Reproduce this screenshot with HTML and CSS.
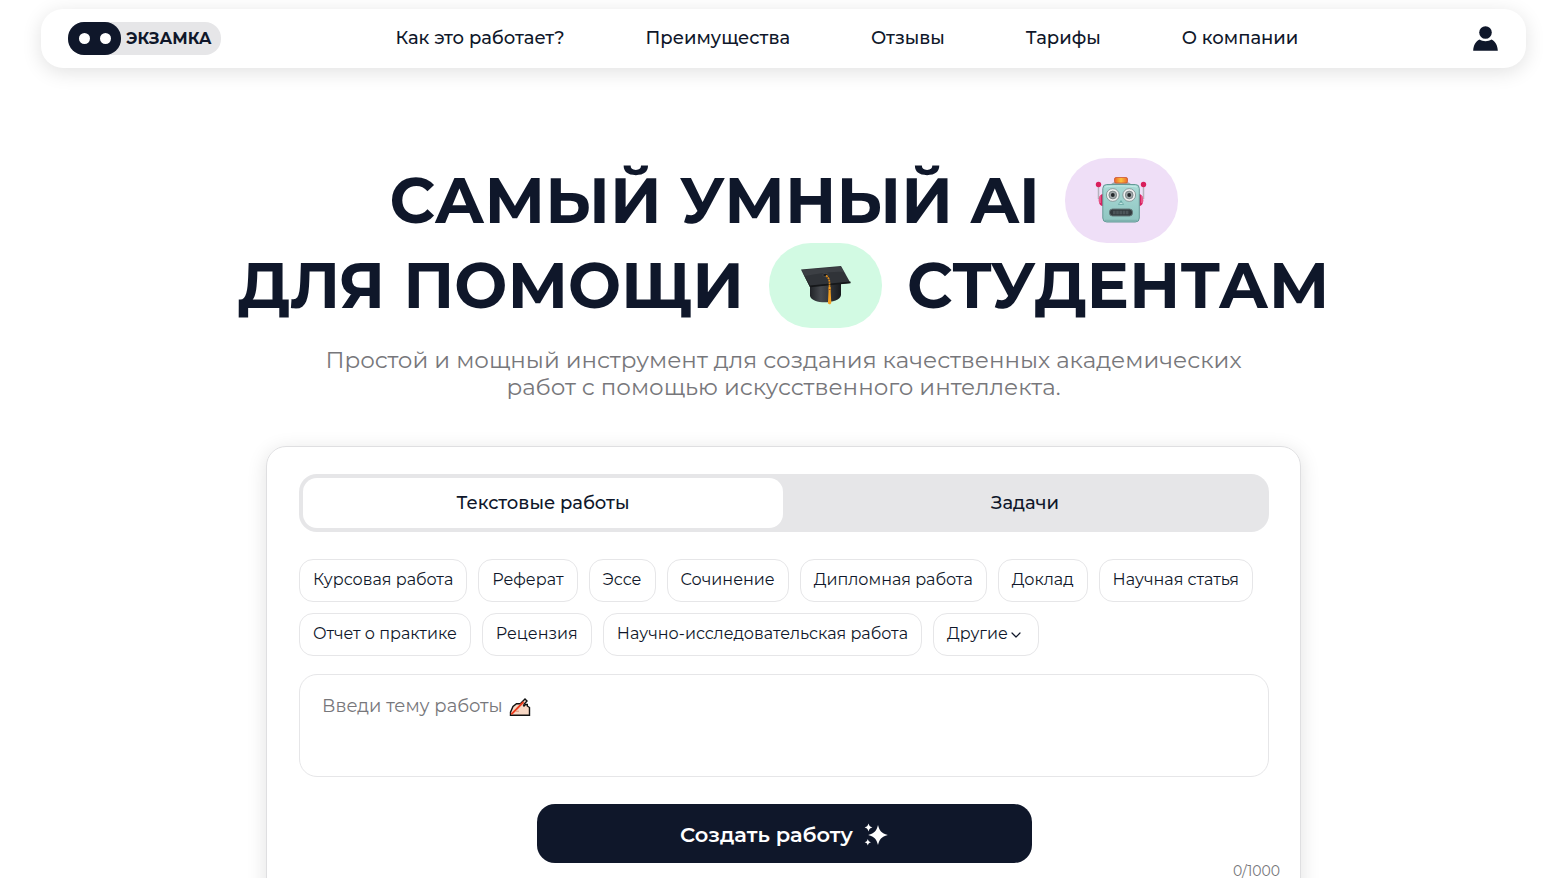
FILE: index.html
```html
<!DOCTYPE html>
<html lang="ru">
<head>
<meta charset="utf-8">
<meta name="viewport" content="width=device-width, initial-scale=1">
<title>ЭКЗАМКА</title>
<link rel="stylesheet" href="styles.css">
</head>
<body>
<header class="header">
  <a class="logo" href="#">
    <span class="logo-mark"><span class="logo-eye"></span><span class="logo-eye"></span></span>
    <span class="logo-name">ЭКЗАМКА</span>
  </a>
  <nav class="nav">
    <a href="#how">Как это работает?</a>
    <a href="#benefits">Преимущества</a>
    <a href="#reviews">Отзывы</a>
    <a href="#prices">Тарифы</a>
    <a href="#about">О компании</a>
  </nav>
  <a class="profile" href="#profile" aria-label="Профиль">
    <svg width="26" height="26" viewBox="0 0 26 26" fill="#0f172a"><circle cx="12.500" cy="6.500" r="6.300"/><path d="M.2 24.700C.4 19.500 2.700 15.600 6.500 13.600c3.500 2.200 8.500 2.200 12 0 3.800 2 6.100 5.900 6.300 11.100z"/></svg>
  </a>
</header>

<main class="main">
  <h1 class="title">
    <span class="title-line">САМЫЙ УМНЫЙ AI
      <span class="pill pill-robot">
        <svg width="52" height="48" viewBox="0 0 52 48">
          <defs>
            <linearGradient id="face" x1="0" y1="0" x2="0" y2="1"><stop offset="0" stop-color="#a9dad6"/><stop offset="1" stop-color="#8fc5c1"/></linearGradient>
            <linearGradient id="lamp" x1="0" y1="0" x2="1" y2="0"><stop offset="0" stop-color="#e8632c"/><stop offset=".5" stop-color="#fcc43a"/><stop offset="1" stop-color="#e9682d"/></linearGradient>
          </defs>
          <path d="M3.500 10v12M48.500 10v12" stroke="#b5b2bd" stroke-width="1.500"/>
          <circle cx="3.500" cy="7.500" r="2.700" fill="#d91f5c"/><circle cx="48.500" cy="7.500" r="2.700" fill="#d91f5c"/>
          <path d="M8 17c-2.500 0-4.300 3-4.300 6.500S5.500 29 8 29zM44 17c2.500 0 4.300 3 4.300 6.500S46.500 29 44 29z" fill="#d62261"/>
          <path d="M5 19v7M47 19v7" stroke="#ef6c98" stroke-width="1.400"/>
          <path d="M16 7.500C17 5.500 20 4.500 26 4.500s9 1 10 3V9H16z" fill="#9aa7ab"/>
          <rect x="19.500" y=".5" width="13" height="5.500" rx="1.500" fill="url(#lamp)" stroke="#cf5630" stroke-width=".8"/>
          <rect x="7.800" y="7.500" width="36.500" height="37.500" rx="4" fill="url(#face)" stroke="#649996"/>
          <path d="M10 10c8-1.500 24-1.500 32 0" stroke="#c8ebe8" fill="none"/>
          <path d="M10 43.500h32" stroke="#7fb3af" stroke-width="1.500"/>
          <g stroke="#79898c" stroke-width=".8"><circle cx="17.800" cy="18" r="6.400" fill="#eef0f0"/><circle cx="34.200" cy="18" r="6.400" fill="#eef0f0"/></g>
          <g fill="#a1a8aa" stroke="#727c7f" stroke-width=".8"><circle cx="17.800" cy="18" r="3.900"/><circle cx="34.200" cy="18" r="3.900"/></g>
          <circle cx="17.800" cy="18" r="1.900" fill="#23272b"/><circle cx="34.200" cy="18" r="1.900" fill="#23272b"/>
          <path d="M26 23l-3.200 4.800h6.400z" fill="#69a8a5"/><path d="M24.500 26.300h3" stroke="#dbf4f1"/>
          <rect x="14.500" y="32" width="23" height="7" rx="3" fill="#343b3f" stroke="#65787a"/>
          <path d="M18 35.500h16" stroke="#4c5559" stroke-width="3.500" stroke-dasharray="2.600 .6"/>
        </svg>
      </span>
    </span>
    <span class="title-line">ДЛЯ ПОМОЩИ
      <span class="pill pill-cap">
        <svg width="52" height="44" viewBox="0 0 52 44">
          <defs><linearGradient id="cap" x1="0" y1="0" x2="1" y2="0"><stop offset="0" stop-color="#202327"/><stop offset=".35" stop-color="#474a4f"/><stop offset="1" stop-color="#181a1d"/></linearGradient></defs>
          <path d="M10 20l31-2v13c-1 9-29 10-31 1z" fill="url(#cap)"/>
          <path d="M1 5.500L41 2l9.500 17L10 23z" fill="#303338"/>
          <path d="M1 5.500L10 21.500l40.500-4v1.700L10 23.200z" fill="#151719"/>
          <path d="M2 6l39-3.200 3 5.200C30 7 18 10 5 12z" fill="#44474c" opacity=".6"/>
          <ellipse cx="25.500" cy="11" rx="2.700" ry="1.600" fill="#181a1d" stroke="#55585d" stroke-width=".6"/>
          <path d="M26 11.500c4 3 3.500 6 3.500 13" stroke="#df8b18" stroke-width="1.700" stroke-dasharray="2 .7" fill="none"/>
          <path d="M28.500 23h2.200v5l.6 11-1.300 1.500-2.100-1 .6-11.500z" fill="#f4a021"/>
          <path d="M28.500 25.500h2.200" stroke="#a45411"/>
        </svg>
      </span>
      СТУДЕНТАМ</span>
  </h1>
  <p class="subtitle">Простой и мощный инструмент для создания качественных академических<br>работ с помощью искусственного интеллекта.</p>

  <form class="card">
    <div class="tabs">
      <button class="tab tab-active" type="button">Текстовые работы</button>
      <button class="tab" type="button">Задачи</button>
    </div>
    <div class="chips">
      <button class="chip" type="button">Курсовая работа</button>
      <button class="chip" type="button">Реферат</button>
      <button class="chip" type="button">Эссе</button>
      <button class="chip" type="button">Сочинение</button>
      <button class="chip" type="button">Дипломная работа</button>
      <button class="chip" type="button">Доклад</button>
      <button class="chip" type="button">Научная статья</button>
      <button class="chip" type="button">Отчет о практике</button>
      <button class="chip" type="button">Рецензия</button>
      <button class="chip" type="button">Научно-исследовательская работа</button>
      <button class="chip" type="button">Другие<svg class="chevron" width="12" height="8" viewBox="0 0 12 8" fill="none" stroke="#0f172a" stroke-width="1.200" stroke-linecap="round" stroke-linejoin="round"><path d="M2 2l4 4 4-4"/></svg></button>
    </div>
    <div class="topic">
      <textarea class="topic-input" aria-label="Введи тему работы" placeholder="Введи тему работы"></textarea>
      <svg class="topic-icon" width="22" height="20" viewBox="0 0 22 20" stroke-linejoin="miter">
        <path d="M1.500 18.200v-3L4 9.500l3.500-2.800h5L15 9l1.500-1.500h1.800V9l2.200 1.500v7.700z" fill="#f7d7c4" stroke="#111" stroke-width="1.400"/>
        <path d="M11.500 6.500L16 2l2 2-5 5.500z" fill="#f7d7c4"/>
        <path d="M11.500 6.500L16 2l2 2-3.500 3.800" fill="none" stroke="#111" stroke-width="1.400"/>
        <path d="M2.300 17.300L14.500 5" stroke="#ee3b1c" stroke-width="1.800"/>
        <path d="M7 14.300h3" stroke="#e0a58c" stroke-width="1.300" fill="none"/>
      </svg>
    </div>
    <button class="submit" type="submit">Создать работу
      <svg width="24" height="24" viewBox="0 0 24 24" fill="#fff"><path d="M14 2c1.500 6 3.300 7.900 9.800 10-6.500 2.100-8.300 4-9.800 10-1.500-6-3.300-7.900-9.800-10C10.700 9.900 12.500 8 14 2z"/><path d="M4.500.6c.8 2.500 1.500 3.200 3.900 3.900-2.400.7-3.100 1.400-3.900 3.900C3.700 5.900 3 5.200.6 4.500 3 3.800 3.700 3.100 4.500.6zM3.800 16c.6 2.100 1.200 2.600 3.200 3.200-2 .6-2.600 1.100-3.200 3.200-.6-2.100-1.200-2.600-3.200-3.200 2-.6 2.600-1.100 3.200-3.200z"/></svg>
    </button>
    <div class="counter">0/1000</div>
  </form>
</main>
</body>
</html>
```
FILE: styles.css
```css
* { box-sizing: border-box; }

html { overflow-x: hidden; }

body {
  margin: 0;
  padding: 9px 32px 0 41px;
  background: #fff;
  color: #0f172a;
  font-family: Montserrat, Inter, "Open Sans", sans-serif;
}

a { color: inherit; text-decoration: none; }

button, textarea { font: inherit; color: inherit; }

.header {
  display: flex;
  align-items: center;
  justify-content: space-between;
  height: 59px;
  padding: 0 27px;
  border-radius: 22px;
  background: #fff;
  box-shadow: 0 4px 20px rgba(0, 0, 0, 0.12);
}

.logo {
  display: flex;
  align-items: center;
  height: 33px;
  border-radius: 16px;
  background: #e6e6e8;
}

.logo-mark {
  display: flex;
  align-items: center;
  justify-content: center;
  gap: 10px;
  width: 53px;
  height: 33px;
  border-radius: 16px;
  background: #0f172a;
}

.logo-eye {
  width: 11px;
  height: 11px;
  border-radius: 50%;
  background: #fff;
}

.logo-name {
  padding: 0 9px 0 5px;
  font-size: 16px;
  font-weight: 700;
}

.nav {
  display: flex;
  gap: 81px;
  padding-bottom: 2px;
  font-size: 18px;
  font-weight: 500;
}

.profile { display: flex; }

.main {
  display: flex;
  flex-direction: column;
  align-items: center;
  padding-top: 90px;
}

.title {
  margin: 0;
  font-size: 63px;
  font-weight: 700;
}

.title-line {
  display: flex;
  align-items: center;
  justify-content: center;
  gap: 25px;
  line-height: 85px;
  white-space: nowrap;
}

.pill {
  display: flex;
  align-items: center;
  justify-content: center;
  width: 113px;
  height: 85px;
  border-radius: 42px;
}

.pill-robot { background: #efdff7; }

.pill-cap { background: #d2fae3; }

.subtitle {
  margin: 19px 0 0;
  color: #77777b;
  font-size: 23px;
  font-weight: 400;
  line-height: 27px;
  text-align: center;
}

.card {
  display: flex;
  flex-direction: column;
  width: 100%;
  max-width: 1035px;
  margin: 45px 0 0;
  padding: 27px 31px 27px 32px;
  border: 1px solid #dfdfe1;
  border-radius: 20px;
  box-shadow: 0 4px 20px rgba(0, 0, 0, 0.12);
}

.tabs {
  display: flex;
  gap: 2px;
  padding: 4px;
  border-radius: 18px;
  background: #e6e6e8;
}

.tab {
  flex: 1;
  height: 50px;
  padding: 0;
  border: 0;
  border-radius: 14px;
  background: transparent;
  font-size: 18px;
  font-weight: 500;
}

.tab-active { background: #fff; }

.chips {
  display: flex;
  flex-wrap: wrap;
  gap: 11px;
  margin-top: 27px;
}

.chip {
  display: flex;
  align-items: center;
  height: 43px;
  padding: 0 13px 2px;
  border: 1px solid #e6e6e8;
  border-radius: 14px;
  background: #fff;
  font-size: 16px;
  font-weight: 400;
}

.chevron { margin: 3px 3px 0 2px; }

.topic {
  position: relative;
  margin-top: 18px;
}

.topic-input {
  display: block;
  width: 100%;
  height: 103px;
  padding: 20px 22px;
  border: 1px solid #e6e6e8;
  border-radius: 18px;
  background: #fff;
  font-size: 18px;
  font-weight: 400;
  line-height: 22px;
  resize: none;
}

.topic-input::placeholder { color: #77777b; opacity: 1; }

.topic-icon {
  position: absolute;
  top: 23px;
  left: 210px;
}

.submit {
  display: flex;
  align-items: center;
  align-self: center;
  justify-content: center;
  gap: 11px;
  width: 100%;
  max-width: 495px;
  height: 59px;
  margin-top: 27px;
  padding: 2px 0 0;
  border: 0;
  border-radius: 18px;
  background: #0f172a;
  color: #fff;
  font-size: 21px;
  font-weight: 600;
}

.counter {
  align-self: flex-end;
  margin-right: -11px;
  color: #77777b;
  font-size: 14px;
  font-weight: 400;
  line-height: 17px;
}
```
